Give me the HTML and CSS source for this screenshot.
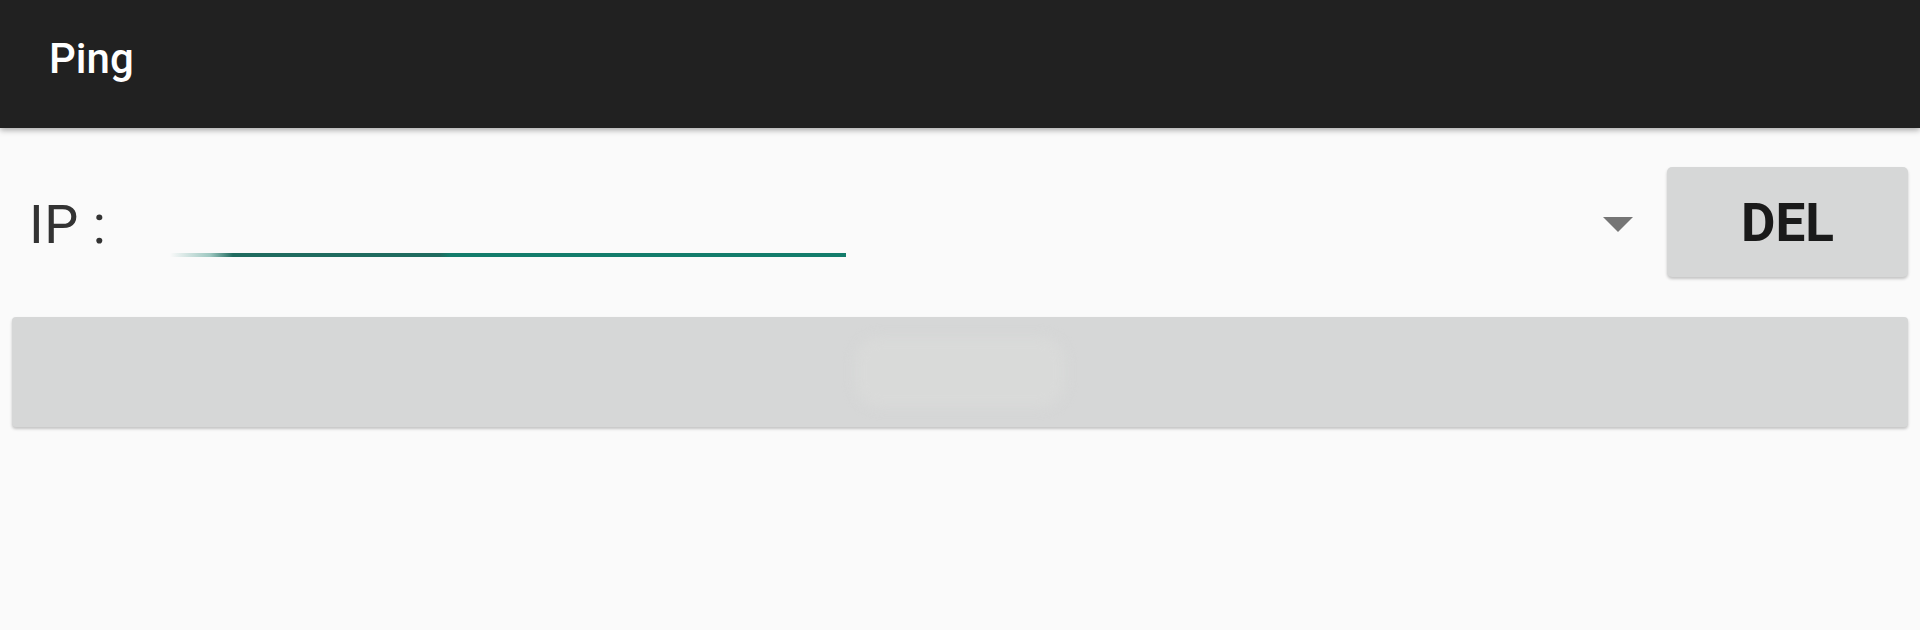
FILE: index.html
```html
<!DOCTYPE html>
<html lang="en">
<head>
<meta charset="utf-8">
<title>Ping</title>
<link rel="stylesheet" href="styles.css">
</head>
<body>
  <header class="appbar">
    <h1 class="appbar-title">Ping</h1>
  </header>
  <main class="content">
    <div class="ip-row">
      <span class="ip-label">IP :</span>
      <div class="ip-field"><div class="ip-underline"></div></div>
      <div class="spinner">
        <svg class="spinner-arrow" width="30" height="15" viewBox="0 0 30 15"><polygon points="0,0 30,0 15,15" fill="#757575"/></svg>
      </div>
      <button class="btn btn-del">DEL</button>
    </div>
    <button class="btn btn-ping"><span class="btn-ping-label"></span></button>
  </main>
</body>
</html>
```
FILE: styles.css
```css
* { box-sizing: border-box; }
html, body { margin: 0; padding: 0; }
body {
  background: #fafafa;
  font-family: Roboto, "Noto Sans", "Liberation Sans", sans-serif;
  width: 1920px;
  height: 630px;
  overflow: hidden;
}
.appbar {
  height: 128px;
  background: #212121;
  padding: 38px 0 0 49px;
  box-shadow: 0 2px 6px rgba(0,0,0,0.35);
  position: relative;
  z-index: 1;
}
.appbar-title {
  margin: 0;
  color: #ffffff;
  font-size: 42px;
  font-weight: 500;
  line-height: 42px;
}
.content {
  padding: 39px 12px 0 0;
}
.ip-row {
  display: flex;
  align-items: center;
  height: 110px;
}
.ip-label {
  font-size: 54px;
  line-height: 54px;
  color: #333333;
  margin-left: 29px;
  margin-top: 5px;
  letter-spacing: 0.5px;
  width: 141px;
  flex: none;
}
.ip-field {
  width: 676px;
  flex: none;
  align-self: flex-start;
  margin-top: 86px;
}
.ip-underline {
  height: 4px;
  background: linear-gradient(to right, rgba(19,124,107,0) 0px, rgba(19,124,107,0.4) 40px, #1f6b5f 63px, #1f6b5f 270px, #137c6b 280px, #137c6b 100%);
}
.spinner {
  flex: 1;
  display: flex;
  justify-content: flex-end;
  align-items: center;
  padding-right: 34px;
  margin-top: 5px;
}
.spinner-arrow { display: block; }
.btn {
  border: none;
  background: #d6d7d7;
  font-family: Roboto, "Noto Sans", "Liberation Sans", sans-serif;
  box-shadow: 0 2px 3px rgba(0,0,0,0.22);
  padding: 0;
}
.btn-del {
  width: 241px;
  height: 110px;
  border-radius: 5px;
  font-size: 53px;
  font-weight: 700;
  color: #1a1a1a;
  flex: none;
  padding-top: 2px;
}
.btn-ping {
  display: flex;
  justify-content: center;
  align-items: center;
  width: 1896px;
  height: 110px;
  margin: 40px 0 0 12px;
  border-radius: 4px;
}
.btn-ping-label {
  display: block;
  width: 210px;
  height: 70px;
  border-radius: 24px;
  background: #d9dad9;
  filter: blur(6px);
}
```
